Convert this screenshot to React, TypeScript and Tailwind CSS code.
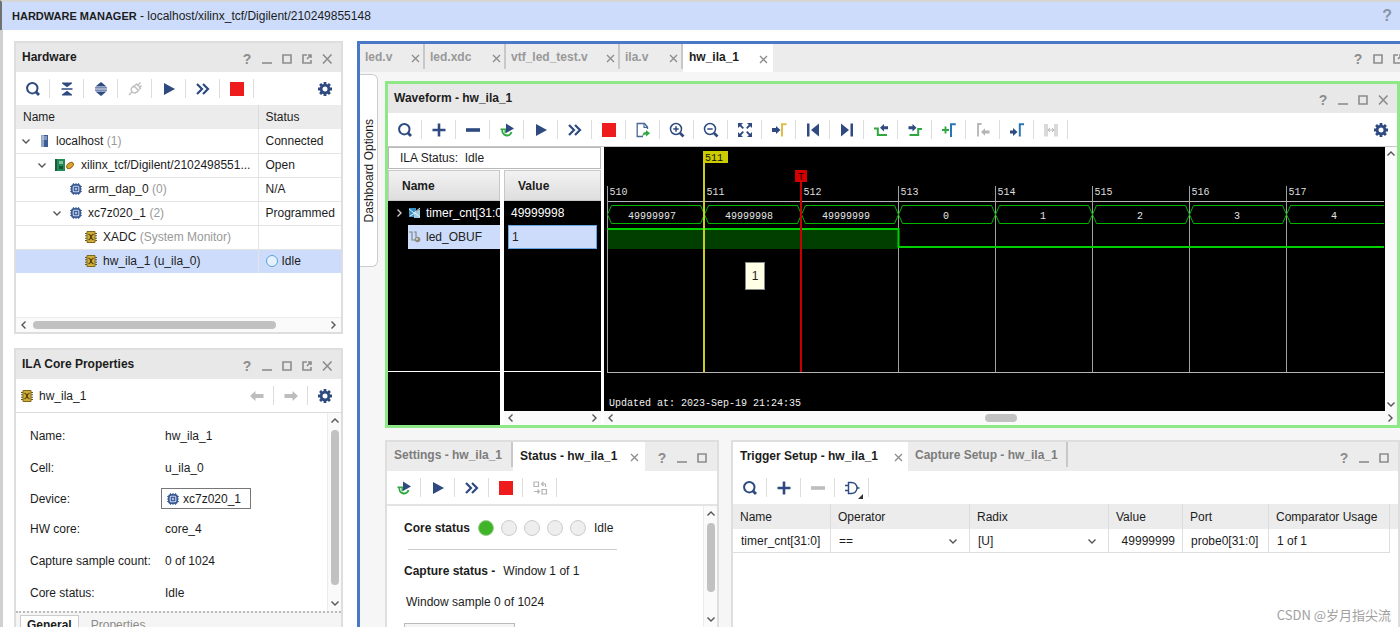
import React from "react";

type Children = { children?: React.ReactNode };

const NAVY = "#2e4a80";
const GREEN = "#2fa83f";
const GREY = "#b4b4b4";

function Icon({ children, size = 16 }: Children & { size?: number }) {
  return (
    <svg width={size} height={size} viewBox="0 0 16 16" fill="none" className="block shrink-0" aria-hidden="true">
      {children}
    </svg>
  );
}

/* ---------- toolbar icons ---------- */

const SearchIcon = () => (
  <Icon>
    <circle cx="7.3" cy="7.2" r="5.2" stroke={NAVY} strokeWidth="2" />
    <path d="M11 11l3 3" stroke={NAVY} strokeWidth="2.8" />
  </Icon>
);
const CollapseIcon = () => (
  <Icon>
    <path d="M3 1.500h10v1L8 6.300 3 2.500zM3 14.500h10v-1L8 9.700l-5 3.800z" fill={NAVY} />
    <path d="M2.500 8h11" stroke={NAVY} strokeWidth="1.500" />
  </Icon>
);
const ExpandIcon = () => (
  <Icon>
    <path d="M8 1l5.500 4.500h-11zM8 15l5.500-4.500h-11z" fill={NAVY} />
    <path d="M2 6.900h12M2 9.100h12" stroke="#4a659c" strokeWidth="1.200" />
  </Icon>
);
const PlugIcon = () => (
  <Icon>
    <path d="M2 14l3-3M5 11c-2-3 0-5 2-6l4.500 4.500c-1.500 2-4 3.500-6.500 1.500zM8 4.500l1.500-1.500 4 4-1.500 1.500M11 4l2.500-2.500M13 6l1.500-1.500" stroke="#c0c0c0" strokeWidth="1.500" />
  </Icon>
);
const PlayIcon = () => (
  <Icon>
    <path d="M3 2l11 6-11 6z" fill={NAVY} />
  </Icon>
);
const FastIcon = () => (
  <Icon>
    <path d="M2 3l5 5-5 5M8 3l5 5-5 5" stroke={NAVY} strokeWidth="2.200" />
  </Icon>
);
const StopIcon = () => (
  <Icon>
    <path d="M1 1h14v14H1z" fill="#ee1c1c" />
  </Icon>
);
const GearIcon = () => (
  <Icon>
    <circle cx="8" cy="8" r="3.900" stroke={NAVY} strokeWidth="2.800" />
    <path d="M8 1v2.500M8 12.500V15M1 8h2.500M12.500 8H15M3.050 3.050l1.800 1.800M11.150 11.150l1.800 1.800M3.050 12.950l1.800-1.800M11.150 4.850l1.800-1.800" stroke={NAVY} strokeWidth="2.800" />
  </Icon>
);
const PlusIcon = () => (
  <Icon>
    <path d="M8 1.500v13M1.500 8h13" stroke={NAVY} strokeWidth="2.600" />
  </Icon>
);
const MinusIcon = ({ color = NAVY }: { color?: string }) => (
  <Icon>
    <path d="M1 8h14" stroke={color} strokeWidth="3.600" />
  </Icon>
);
const RerunIcon = () => (
  <Icon>
    <path d="M3.500 7.500a4.600 4.600 0 1 0 9 2.500" stroke={GREEN} strokeWidth="1.900" />
    <path d="M1.500 7.200h4.700v4" stroke={GREEN} strokeWidth="1.500" />
    <path d="M7 1.500L15 6.500 7 11z" fill={NAVY} />
  </Icon>
);
const ExportIcon = () => (
  <Icon>
    <path d="M12.500 7V5L9.500 1.500H2.200v13H8" stroke="#4a6597" strokeWidth="1.300" />
    <path d="M9 2v3.400h3.500" stroke="#4a6597" strokeWidth="1.100" />
    <path d="M7.500 14.500c0-3 1-4.500 3.500-4.500V8l4 3.200-4 3.200v-2c-1.500 0-2.500.5-3.500 2.100z" fill={GREEN} />
  </Icon>
);
const ZoomIcon = ({ out = false }: { out?: boolean }) => (
  <Icon>
    <circle cx="7" cy="7" r="5.500" stroke={NAVY} strokeWidth="1.500" />
    <path d="M11 11l3.500 3.500" stroke={NAVY} strokeWidth="2.600" />
    <path d={out ? "M4.300 7h5.400" : "M4.300 7h5.400M7 4.300v5.400"} stroke={NAVY} strokeWidth="1.500" />
  </Icon>
);
const FitIcon = () => (
  <Icon>
    <path d="M1 1h5L1 6zM15 1h-5l5 5zM1 15h5l-5-5zM15 15h-5l5-5z" fill={NAVY} />
    <path d="M3 3l3.300 3.300M13 3L9.700 6.300M3 13l3.300-3.300M13 13L9.700 9.700" stroke={NAVY} strokeWidth="1.800" />
  </Icon>
);
const Arrow = ({ d, color = NAVY }: { d: string; color?: string }) => <path d={d} fill={color} />;
const ToCursorIcon = () => (
  <Icon>
    <Arrow d="M1 6h4V4l4.500 4L5 12v-2H1z" />
    <path d="M11 14.500V2.200h4.500" stroke="#e0bd45" strokeWidth="2" />
  </Icon>
);
const FirstIcon = () => (
  <Icon>
    <path d="M2 1.500h2.500v13H2zM14 1.500v13L6 8z" fill={NAVY} />
  </Icon>
);
const LastIcon = () => (
  <Icon>
    <path d="M14 1.500h-2.500v13H14zM2 1.500v13L10 8z" fill={NAVY} />
  </Icon>
);
const PrevEdgeIcon = () => (
  <Icon>
    <path d="M1 6.500h3.800v6.500H14" stroke={GREEN} strokeWidth="2" />
    <Arrow d="M7 5.800l4-3.800v2.300h4v3h-4v2.300z" />
  </Icon>
);
const NextEdgeIcon = () => (
  <Icon>
    <path d="M2.500 13h8.700V7H15" stroke={GREEN} strokeWidth="2" />
    <Arrow d="M9.500 5.800L5.500 2v2.300h-4v3h4v2.300z" />
  </Icon>
);
const AddMarkerIcon = () => (
  <Icon>
    <path d="M1 8h7M4.500 4.500v7" stroke={GREEN} strokeWidth="1.900" />
    <path d="M10 15V2.200h4.800" stroke="#2877b5" strokeWidth="2" />
  </Icon>
);
const PrevMarkerIcon = () => (
  <Icon>
    <path d="M6.500 2H3v12.500" stroke={GREY} strokeWidth="1.800" />
    <Arrow d="M6 10l4-3.800v2.300h4.500v3H10v2.300z" color={GREY} />
  </Icon>
);
const NextMarkerIcon = () => (
  <Icon>
    <Arrow d="M1 8.500h3V6l4.500 4L4 14v-2.500H1z" />
    <path d="M10.800 14.500V2.200H15" stroke="#2877b5" strokeWidth="2" />
  </Icon>
);
const SpanIcon = () => (
  <Icon>
    <path d="M2 2v12.500M14 2v12.500M4 2v12.500M12 2v12.500M4.500 8h7M7 6L5 8l2 2M9 6l2 2-2 2" stroke={GREY} strokeWidth="1" />
  </Icon>
);
const SwapIcon = () => (
  <Icon>
    <path d="M2 2h4.500v4.500H2zM10 9.500h4.500V14H10z" stroke={GREY} strokeWidth="1.200" />
    <path d="M9.500 4h4v3M11.500 2l-2 2 2 2M2 11.500h5.500M5.500 9.500l2 2-2 2" stroke={GREY} strokeWidth="1.200" />
  </Icon>
);
const GateIcon = () => (
  <span className="relative block">
    <Icon>
      <path d="M4.500 2.500h3a5.500 5.500 0 0 1 0 11h-3zM1 5.500h3.500M1 10.500h3.500M13 8h2.500" stroke={NAVY} strokeWidth="1.400" />
    </Icon>
    <svg width="5" height="5" className="absolute -right-[3px] -bottom-[3px]" aria-hidden="true">
      <path d="M5 0v5H0z" fill="#333" />
    </svg>
  </span>
);
const FatArrow = ({ right = false }: { right?: boolean }) => (
  <Icon>
    <path d={right ? "M15 8L9.500 3v3H1.500v4h8v3z" : "M1 8l5.500-5v3h8v4h-8v3z"} fill="#bdbdbd" />
  </Icon>
);

/* ---------- tree icons ---------- */

const ServerIcon = () => (
  <svg width="11" height="12" viewBox="0 0 11 12" className="shrink-0" aria-hidden="true">
    <path d="M2 0h7v12H2z" fill="#8fa6c8" />
    <path d="M5 0h4v12H5z" fill="#3e5d94" />
    <path d="M3 2h5M3 4h5" stroke="#c6d3e6" strokeWidth="1" />
  </svg>
);
const BoardIcon = () => (
  <svg width="20" height="12" viewBox="0 0 20 12" className="shrink-0" aria-hidden="true">
    <path d="M0 0h10v12H0z" fill="#268a57" />
    <path d="M0 0h2v12H0z" fill="#175f3a" />
    <path d="M4 2h4v3H4z" fill="#7cc49b" />
    <path d="M4 7h4v3H4z" fill="#125633" />
    <ellipse cx="15" cy="6.500" rx="3.800" ry="2.400" transform="rotate(-40 15 6.500)" fill="#dca62c" stroke="#92681a" />
  </svg>
);
const ChipIcon = () => (
  <svg width="12" height="12" viewBox="0 0 12 12" fill="none" className="shrink-0" aria-hidden="true">
    <path d="M3.500 0v12M6 0v12M8.500 0v12M0 3.500h12M0 6h12M0 8.500h12" stroke="#5f7cae" strokeWidth="1.200" />
    <rect x="1.800" y="1.800" width="8.400" height="8.400" rx="2.500" fill="#d3def2" stroke="#3a5a94" strokeWidth="1.800" />
    <rect x="4.300" y="4.300" width="3.400" height="3.400" fill="#a9bbdc" stroke="#3a5a94" strokeWidth="1.200" />
  </svg>
);
const CoreIcon = () => (
  <svg width="12" height="12" viewBox="0 0 12 12" fill="none" className="shrink-0" aria-hidden="true">
    <path d="M0 2.500h12M0 4.800h12M0 7.200h12M0 9.500h12" stroke="#5a5236" strokeWidth="1.100" />
    <path d="M2 .5h8v11H2z" fill="#d3ae35" stroke="#80691d" />
    <path d="M3.500 3l2 1.500v3L3.500 9M8.500 3l-2 1.500v3L8.500 9" stroke="#574610" strokeWidth="1.100" />
  </svg>
);
const BusIcon = () => (
  <svg width="12" height="12" viewBox="0 0 12 12" className="shrink-0" aria-hidden="true">
    <path d="M0 1h7v9H0z" fill="#3a92c4" />
    <path d="M5 6l6-4v9H5z" fill="#9fc9df" />
    <path d="M0 2l5 4 6-5M1 9l5-3 5 4" stroke="#e4f3fa" fill="none" />
  </svg>
);
const NetIcon = () => (
  <svg width="12" height="12" viewBox="0 0 12 12" fill="none" className="shrink-0" aria-hidden="true">
    <path d="M0 1h3v8h3M5 1h2v5" stroke="#7d8a8c" strokeWidth="1.200" />
    <circle cx="8.500" cy="8.500" r="2.800" fill="#8c8c80" />
    <circle cx="8" cy="8" r="1" fill="#dcdccf" />
  </svg>
);

function Chevron({ dir, color = "#555" }: { dir: "up" | "down" | "left" | "right"; color?: string }) {
  const paths = {
    up: "M1.500 6.500l3.500-3.500 3.500 3.500",
    down: "M1.500 3.500l3.500 3.500 3.500-3.500",
    left: "M6.500 1.500l-3.500 3.500 3.500 3.500",
    right: "M3.500 1.500l3.500 3.500-3.500 3.500",
  };
  return (
    <svg width="10" height="10" viewBox="0 0 10 10" fill="none" className="block shrink-0" aria-hidden="true">
      <path d={paths[dir]} stroke={color} strokeWidth="1.400" />
    </svg>
  );
}

/* ---------- window controls ---------- */

type Ctl = "help" | "min" | "max" | "pop" | "close";
const ctlLabels: Record<Ctl, string> = { help: "Help", min: "Minimize", max: "Maximize", pop: "Float", close: "Close" };
const ctlPaths: Record<Exclude<Ctl, "help">, string> = {
  min: "M1 10h10",
  max: "M2 2h8v8H2z",
  pop: "M6 2H2v8h8V7M7 2h3v3M10 2L6 6",
  close: "M2 1.500l8.500 9M10.500 1.500l-8.500 9",
};

function Controls({ items }: { items: Ctl[] }) {
  return (
    <div className="flex shrink-0 items-center pt-[2px]">
      {items.map((c) => (
        <button key={c} aria-label={ctlLabels[c]} className="flex size-5 items-center justify-center text-sm font-bold text-[#8c8c8c]">
          {c === "help" ? (
            "?"
          ) : (
            <svg width="12" height="12" viewBox="0 0 12 12" fill="none" aria-hidden="true">
              <path d={ctlPaths[c]} stroke="#8c8c8c" strokeWidth="1.600" />
            </svg>
          )}
        </button>
      ))}
    </div>
  );
}

function TitleBar({ title, items }: { title: string; items: Ctl[] }) {
  return (
    <div className="flex h-[29px] shrink-0 items-center justify-between bg-[#e8e8e8] pr-1 pl-[6px]">
      <h2 className="pb-[2px] font-bold">{title}</h2>
      <Controls items={items} />
    </div>
  );
}

type Tool = [string, React.ReactNode];

function Toolbar({ tools, gear = false }: { tools: Tool[]; gear?: boolean }) {
  return (
    <div className="flex h-[33px] shrink-0 items-center justify-between bg-white">
      <div className="flex">
        {tools.map(([label, icon]) => (
          <button key={label} aria-label={label} className="flex h-[19px] w-[34px] items-center justify-center border-r border-[#dcdcdc]">
            {icon}
          </button>
        ))}
      </div>
      {gear && (
        <button aria-label="Settings" className="flex w-[33px] justify-center">
          <GearIcon />
        </button>
      )}
    </div>
  );
}

function CloseX() {
  return (
    <svg width="9" height="9" viewBox="0 0 9 9" fill="none" className="mt-[2px] shrink-0" aria-hidden="true">
      <path d="M1 1l7 7M8 1L1 8" stroke="#8c8c8c" strokeWidth="1.300" />
    </svg>
  );
}

function VScroll({ thumb }: { thumb: string }) {
  return (
    <div className="flex w-[14px] shrink-0 flex-col items-center gap-1 border-l border-[#ececec] bg-[#fafafa] py-[3px]">
      <Chevron dir="up" />
      <div className="flex flex-1 flex-col">
        <div className={`w-2 rounded-full bg-[#c1c1c1] ${thumb}`} />
      </div>
      <Chevron dir="down" />
    </div>
  );
}

/* ---------- left column ---------- */

const hwTools: Tool[] = [
  ["Search", <SearchIcon />],
  ["Collapse all", <CollapseIcon />],
  ["Expand all", <ExpandIcon />],
  ["Auto connect", <PlugIcon />],
  ["Run trigger", <PlayIcon />],
  ["Run immediate", <FastIcon />],
  ["Stop", <StopIcon />],
];

type HwRow = { pad: string; open?: boolean; icon: React.ReactNode; name: string; note?: string; status: string; selected?: boolean };
const hwRows: HwRow[] = [
  { pad: "pl-[5px]", open: true, icon: <ServerIcon />, name: "localhost", note: "(1)", status: "Connected" },
  { pad: "pl-[21px]", open: true, icon: <BoardIcon />, name: "xilinx_tcf/Digilent/2102498551...", status: "Open" },
  { pad: "pl-[54px]", icon: <ChipIcon />, name: "arm_dap_0", note: "(0)", status: "N/A" },
  { pad: "pl-[36px]", open: true, icon: <ChipIcon />, name: "xc7z020_1", note: "(2)", status: "Programmed" },
  { pad: "pl-[69px]", icon: <CoreIcon />, name: "XADC", note: "(System Monitor)", status: "" },
  { pad: "pl-[69px]", icon: <CoreIcon />, name: "hw_ila_1 (u_ila_0)", status: "Idle", selected: true },
];

function HardwarePanel() {
  return (
    <section className="flex flex-col border-2 border-[#dedede] bg-white">
      <TitleBar title="Hardware" items={["help", "min", "max", "pop", "close"]} />
      <Toolbar tools={hwTools} gear />
      <table className="w-full table-fixed border-collapse text-left">
        <thead>
          <tr className="h-6 bg-[#ececec]">
            <th className="border-r border-[#dcdcdc] pl-[7px] font-normal">Name</th>
            <th className="w-[83px] pl-[7px] font-normal">Status</th>
          </tr>
        </thead>
        <tbody>
          {hwRows.map((r) => (
            <tr key={r.name} className={r.selected ? "h-6 bg-[#cddcfb]" : "h-6 border-b border-[#e4e4e4]"}>
              <td className="border-r border-[#e4e4e4] p-0">
                <div className={`flex items-center gap-[6px] whitespace-nowrap ${r.pad}`}>
                  {r.open && (
                    <span className="mr-[2px]">
                      <Chevron dir="down" />
                    </span>
                  )}
                  {r.icon}
                  <span>
                    {r.name} {r.note && <span className="text-[#999]">{r.note}</span>}
                  </span>
                </div>
              </td>
              <td className="p-0 pl-[7px]">
                <div className="flex items-center gap-1">
                  {r.selected && <span className="size-3 rounded-full border border-[#55a4d8] bg-[#e6effc]" />}
                  {r.status}
                </div>
              </td>
            </tr>
          ))}
        </tbody>
      </table>
      <div className="h-11" />
      <div className="flex h-[15px] items-center gap-1 border-t border-[#ececec] bg-[#fafafa] px-[3px]">
        <Chevron dir="left" />
        <div className="flex-1">
          <div className="h-2 w-5/6 rounded-full bg-[#c1c1c1]" />
        </div>
        <Chevron dir="right" />
      </div>
    </section>
  );
}

function PropRow({ label, children }: Children & { label: string }) {
  return (
    <div className="flex h-8 items-center">
      <dt className="w-[135px] shrink-0">{label}</dt>
      <dd>{children}</dd>
    </div>
  );
}

function PropertiesPanel() {
  return (
    <section className="flex min-h-0 flex-1 flex-col border-2 border-b-0 border-[#dedede] bg-white">
      <TitleBar title="ILA Core Properties" items={["help", "min", "max", "pop", "close"]} />
      <div className="flex h-[33px] shrink-0 items-center pl-[5px]">
        <CoreIcon />
        <span className="ml-[6px] flex-1">hw_ila_1</span>
        <button aria-label="Back" className="flex h-[19px] w-[34px] items-center justify-center border-r border-[#dcdcdc]">
          <FatArrow />
        </button>
        <button aria-label="Forward" className="flex h-[19px] w-[34px] items-center justify-center border-r border-[#dcdcdc]">
          <FatArrow right />
        </button>
        <button aria-label="Settings" className="flex w-[33px] justify-center">
          <GearIcon />
        </button>
      </div>
      <div className="flex h-[199px] shrink-0 border-t border-[#dcdcdc]">
        <dl className="flex-1 pt-[7px] pl-[14px]">
          <PropRow label="Name:">hw_ila_1</PropRow>
          <PropRow label="Cell:">u_ila_0</PropRow>
          <div className="flex h-[29px] items-center">
            <dt className="w-[131px] shrink-0">Device:</dt>
            <dd>
              <button className="flex h-[21px] w-[90px] items-center gap-1 border border-[#777] bg-white pl-[5px]">
                <ChipIcon />
                xc7z020_1
              </button>
            </dd>
          </div>
          <PropRow label="HW core:">core_4</PropRow>
          <PropRow label="Capture sample count:">0 of 1024</PropRow>
          <PropRow label="Core status:">Idle</PropRow>
        </dl>
        <VScroll thumb="h-[155px]" />
      </div>
      <div className="flex flex-1 items-start border-t-2 border-dotted border-[#bbb] bg-[#f5f5f5] pt-[2px] pl-1">
        <button className="h-5 border border-[#ccc] bg-white px-[6px] font-bold">General</button>
        <button className="h-5 px-3 text-[#8c8c8c]">Properties</button>
      </div>
    </section>
  );
}

/* ---------- waveform ---------- */

const waveTools: Tool[] = [
  ["Search", <SearchIcon />],
  ["Add probes", <PlusIcon />],
  ["Remove", <MinusIcon />],
  ["Auto re-trigger", <RerunIcon />],
  ["Run trigger", <PlayIcon />],
  ["Run immediate", <FastIcon />],
  ["Stop", <StopIcon />],
  ["Export data", <ExportIcon />],
  ["Zoom in", <ZoomIcon />],
  ["Zoom out", <ZoomIcon out />],
  ["Zoom fit", <FitIcon />],
  ["Go to cursor", <ToCursorIcon />],
  ["Go to start", <FirstIcon />],
  ["Go to end", <LastIcon />],
  ["Previous transition", <PrevEdgeIcon />],
  ["Next transition", <NextEdgeIcon />],
  ["Add marker", <AddMarkerIcon />],
  ["Previous marker", <PrevMarkerIcon />],
  ["Next marker", <NextMarkerIcon />],
  ["Swap cursors", <SpanIcon />],
];

const samples = ["49999997", "49999998", "49999999", "0", "1", "2", "3", "4"];
const PITCH = 97;
const X0 = 3.5;

function WaveChart() {
  return (
    <svg className="block h-full w-full" role="img" aria-label="Captured waveform" fontFamily="'Liberation Mono', monospace" fontSize="10">
      <rect x={X0} y="82" width={PITCH * 3} height="20" fill="#003f00" />
      <path d="M3 54.500H2000M3 225.500H2000" stroke="#b5b5b5" />
      {samples.map((v, i) => {
        const x = X0 + i * PITCH;
        const last = i === samples.length - 1;
        return (
          <g key={v}>
            <path d={`M${x} 39V225`} stroke="#a0a0a0" />
            <text x={x + 2} y="48" fill="#dedede">
              {510 + i}
            </text>
            <path
              d={last ? `M2000 58.500H${x + 4}L${x} 67.500L${x + 4} 76.500H2000` : `M${x + 4} 58.500H${x + PITCH - 4}L${x + PITCH} 67.500L${x + PITCH - 4} 76.500H${x + 4}L${x} 67.500Z`}
              fill="none"
              stroke="#00b400"
            />
            <text x={x + PITCH / 2 - (v.length > 1 ? 4 : 1)} y="72" textAnchor="middle" fill="#e4e4e4">
              {v}
            </text>
          </g>
        );
      })}
      <path d="M3 82H294.500V100H2000" fill="none" stroke="#00d000" strokeWidth="2" />
      <path d="M100 4V225" stroke="#cccc22" strokeWidth="2" />
      <rect x="99" y="4" width="25" height="12" fill="#cccc00" />
      <text x="101" y="14" fill="#111">
        511
      </text>
      <path d="M197 34V225" stroke="#c80000" strokeWidth="2" />
      <rect x="191" y="23" width="12" height="12" fill="#d40000" />
      <text x="194" y="33" fill="#200">
        T
      </text>
      <text x="5" y="259" fill="#f0f0f0">
        Updated at: 2023-Sep-19 21:24:35
      </text>
    </svg>
  );
}

function SignalColumns() {
  const head = "flex h-[31px] items-center border border-[#c8c8c8] bg-linear-to-b from-[#f2f2f2] to-[#dedede] font-bold";
  return (
    <div className="flex w-[213px] shrink-0 flex-col">
      <div className="mb-px flex h-[22px] items-center border border-[#b8b8b8] bg-white pl-[11px]">ILA Status:&nbsp; Idle</div>
      <div className="flex min-h-0 flex-1 gap-1">
        <div className="flex w-28 flex-col overflow-hidden">
          <div className={`${head} pl-[13px]`}>Name</div>
          <div className="flex h-[171px] flex-col border-b border-white bg-black text-white">
            <div className="flex h-6 items-center gap-[5px] pl-[6px] whitespace-nowrap">
              <Chevron dir="right" color="#ccc" />
              <BusIcon />
              <span>timer_cnt[31:0]</span>
            </div>
            <div className="ml-5 flex h-6 items-center gap-[5px] bg-[#cddcfb] pl-px text-[#222]">
              <NetIcon />
              <span>led_OBUF</span>
            </div>
          </div>
          <div className="flex-1 bg-black" />
        </div>
        <div className="flex flex-1 flex-col">
          <div className={`${head} pl-[13px]`}>Value</div>
          <div className="flex h-[171px] flex-col border-b border-white bg-black text-white">
            <div className="flex h-6 items-center pl-[7px]">49999998</div>
            <div className="mx-1 flex h-6 items-center border border-[#66a5e4] bg-[#cddcfb] pl-[3px] text-[#222]">1</div>
          </div>
          <div className="flex-1 bg-black" />
          <div className="flex h-[14px] items-center justify-between bg-[#fafafa] px-[2px]">
            <Chevron dir="left" />
            <Chevron dir="right" />
          </div>
        </div>
      </div>
    </div>
  );
}

function WaveformPanel() {
  return (
    <section className="shrink-0 border-[3px] border-[#8ee888] bg-white">
      <TitleBar title="Waveform - hw_ila_1" items={["help", "min", "max", "close"]} />
      <Toolbar tools={waveTools} gear />
      <div className="flex gap-[3px] border-t border-[#c8c8c8]">
        <SignalColumns />
        <div className="flex min-w-0 flex-1 flex-col">
          <div className="flex h-[264px]">
            <div className="relative min-w-0 flex-1 bg-black pr-px">
              <WaveChart />
              <div role="tooltip" className="absolute top-[115px] left-[141px] flex h-7 w-5 items-center justify-center border border-[#888] bg-[#ffffe6]">
                1
              </div>
            </div>
            <div className="flex w-3 flex-col items-center justify-between bg-[#fafafa] py-[2px]">
              <Chevron dir="up" />
              <Chevron dir="down" />
            </div>
          </div>
          <div className="flex h-[14px] items-center bg-[#fafafa] px-[2px]">
            <Chevron dir="left" />
            <div className="flex flex-1 justify-center">
              <div className="h-2 w-8 rounded-full bg-[#c1c1c1]" />
            </div>
            <Chevron dir="right" />
          </div>
        </div>
      </div>
    </section>
  );
}

/* ---------- lower panels ---------- */

const statusTools: Tool[] = [
  ["Auto re-trigger", <RerunIcon />],
  ["Run trigger", <PlayIcon />],
  ["Run immediate", <FastIcon />],
  ["Stop", <StopIcon />],
  ["Compare", <SwapIcon />],
];

function StatusPanel() {
  return (
    <section className="flex w-[334px] shrink-0 flex-col border-2 border-b-0 border-[#dedede] bg-white">
      <div className="flex h-[29px] shrink-0 justify-between bg-[#ececec] pr-[5px]">
        <div role="tablist" className="flex font-bold">
          <button role="tab" aria-selected="false" className="mb-1 w-[126px] border-r-2 border-[#c8c8c8] pt-px pl-[7px] text-left text-[#7c7c7c]">
            Settings - hw_ila_1
          </button>
          <button role="tab" aria-selected="true" className="flex w-[132px] items-center justify-between bg-white pr-[6px] pl-[7px]">
            <span className="pb-[2px]">Status - hw_ila_1</span>
            <CloseX />
          </button>
        </div>
        <Controls items={["help", "min", "max"]} />
      </div>
      <Toolbar tools={statusTools} />
      <div className="flex min-h-0 flex-1 border-t-2 border-[#e4e4e4]">
        <div className="flex flex-1 flex-col overflow-hidden pl-[17px]">
          <div className="flex h-[43px] w-[212px] shrink-0 items-center">
            <b className="w-[74px]">Core status</b>
            <span className="flex gap-[7px]">
              {[true, false, false, false, false].map((on, i) => (
                <span key={i} className={`size-4 rounded-full border ${on ? "border-[#9bd08c] bg-[#40b428]" : "border-[#ccc] bg-[#eee]"}`} />
              ))}
            </span>
            <span className="ml-2">Idle</span>
          </div>
          <div className="ml-1 w-[209px] shrink-0 border-t border-[#ccc]" />
          <div className="flex h-[42px] shrink-0 items-center gap-2">
            <b>Capture status -</b>
            <span>Window 1 of 1</span>
          </div>
          <div className="flex h-5 shrink-0 items-center pl-[2px]">Window sample 0 of 1024</div>
          <div className="mt-[11px] h-5 w-[111px] shrink-0 border border-[#bbb] bg-[#f4f4f4]" />
        </div>
        <VScroll thumb="h-[69px]" />
      </div>
    </section>
  );
}

const triggerTools: Tool[] = [
  ["Search", <SearchIcon />],
  ["Add probe", <PlusIcon />],
  ["Remove probe", <MinusIcon color="#bdbdbd" />],
  ["Trigger condition", <GateIcon />],
];

function CellSelect({ label, value }: { label: string; value: string }) {
  return (
    <div className="relative flex items-center">
      <select aria-label={label} defaultValue={value} className="w-full appearance-none bg-transparent pl-2">
        <option>{value}</option>
      </select>
      <span className="pointer-events-none absolute right-[11px]">
        <Chevron dir="down" />
      </span>
    </div>
  );
}

function TriggerPanel() {
  const cols: [string, string][] = [
    ["Name", "w-[98px]"],
    ["Operator", ""],
    ["Radix", ""],
    ["Value", "w-[74px]"],
    ["Port", "w-[86px]"],
    ["Comparator Usage", "w-[121px]"],
  ];
  const cell = "border-r border-b border-[#dedede] p-0";
  return (
    <section className="min-w-0 flex-1 border-2 border-b-0 border-[#dedede] bg-white">
      <div className="flex h-[29px] justify-between bg-[#ececec] pr-1">
        <div role="tablist" className="flex font-bold">
          <button role="tab" aria-selected="true" className="flex w-[175px] items-center justify-between bg-white pr-[5px] pl-[7px]">
            <span className="pb-[2px]">Trigger Setup - hw_ila_1</span>
            <CloseX />
          </button>
          <button role="tab" aria-selected="false" className="mb-1 w-[160px] border-r-2 border-[#c8c8c8] pt-px pl-[7px] text-left text-[#7c7c7c]">
            Capture Setup - hw_ila_1
          </button>
        </div>
        <Controls items={["help", "min", "max"]} />
      </div>
      <Toolbar tools={triggerTools} />
      <table className="w-full table-fixed border-separate border-spacing-0 text-left">
        <thead>
          <tr className="h-[25px] bg-[#ececec]">
            {cols.map(([name, w]) => (
              <th key={name} className={`border-r border-[#dcdcdc] p-0 pl-[7px] font-normal ${w}`}>
                {name}
              </th>
            ))}
            <th className="w-2 p-0" aria-label="Spacer" />
          </tr>
        </thead>
        <tbody>
          <tr className="h-6">
            <td className={cell}>
              <span className="pl-2">timer_cnt[31:0]</span>
            </td>
            <td className={cell}>
              <CellSelect label="Operator" value="==" />
            </td>
            <td className={cell}>
              <CellSelect label="Radix" value="[U]" />
            </td>
            <td className={cell}>
              <span className="block pr-[7px] text-right">49999999</span>
            </td>
            <td className={cell}>
              <span className="pl-2">probe0[31:0]</span>
            </td>
            <td className={cell}>
              <span className="pl-2">1 of 1</span>
            </td>
            <td />
          </tr>
        </tbody>
      </table>
    </section>
  );
}

/* ---------- page ---------- */

const fileTabs: [string, string][] = [
  ["led.v", "w-[65px]"],
  ["led.xdc", "w-[81px]"],
  ["vtf_led_test.v", "w-[114px]"],
  ["ila.v", "w-[63px]"],
];

export default function App() {
  return (
    <div className="relative flex h-screen flex-col overflow-hidden bg-white font-['Liberation_Sans',Arial,'Noto_Sans_CJK_SC',sans-serif] text-xs text-[#1c1c1c]">
      <header className="flex h-[30px] shrink-0 items-center justify-between border-t-2 border-l-2 border-t-[#d6d6d6] border-l-[#707070] bg-[#cddcfb] pr-2 pl-[10px]">
        <h1>
          <b className="text-[11px]">HARDWARE MANAGER</b> - localhost/xilinx_tcf/Digilent/210249855148
        </h1>
        <button aria-label="Help" className="text-base font-bold text-[#8a93a8]">
          ?
        </button>
      </header>
      <div className="flex min-h-0 flex-1 gap-[14px] pt-[11px] pl-[11px] border-l-[3px] border-[#d0d0d0]">
        <aside className="flex w-[329px] shrink-0 flex-col gap-[14px]">
          <HardwarePanel />
          <PropertiesPanel />
        </aside>
        <main className="flex min-w-0 flex-1 flex-col border-t-[3px] border-l-[3px] border-[#4878c6] bg-[#f6f6f6]">
          <div className="flex h-[28px] shrink-0 justify-between overflow-hidden bg-[#ececec]">
            <div role="tablist" className="flex font-bold">
              {fileTabs.map(([name, w]) => (
                <button key={name} role="tab" aria-selected="false" className={`mb-[3px] flex items-center justify-between border-r-2 border-[#c8c8c8] pt-px pr-[3px] pl-[5px] text-[#999] ${w}`}>
                  {name}
                  <CloseX />
                </button>
              ))}
              <button role="tab" aria-selected="true" className="flex w-[90px] items-center justify-between bg-white pr-[5px] pl-[6px]">
                <span className="pb-[2px]">hw_ila_1</span>
                <CloseX />
              </button>
            </div>
            <div className="-mr-2 flex">
              <Controls items={["help", "max", "pop"]} />
            </div>
          </div>
          <div className="flex min-h-0 flex-1 gap-[7px]">
            <button className="mt-[2px] flex h-[193px] w-[18px] shrink-0 items-center justify-center rounded-r-md border border-l-0 border-[#ccc] bg-white">
              <span className="rotate-180 [writing-mode:vertical-rl]">Dashboard Options</span>
            </button>
            <div className="flex min-w-0 flex-1 flex-col gap-3 pt-[9px]">
              <WaveformPanel />
              <div className="flex min-h-0 flex-1 gap-3">
                <StatusPanel />
                <TriggerPanel />
              </div>
            </div>
          </div>
        </main>
      </div>
      <div className="absolute right-[9px] bottom-[2px] font-['Noto_Sans_CJK_SC',sans-serif] text-[13px] leading-5 text-[#a0a0a0]">CSDN @岁月指尖流</div>
    </div>
  );
}
